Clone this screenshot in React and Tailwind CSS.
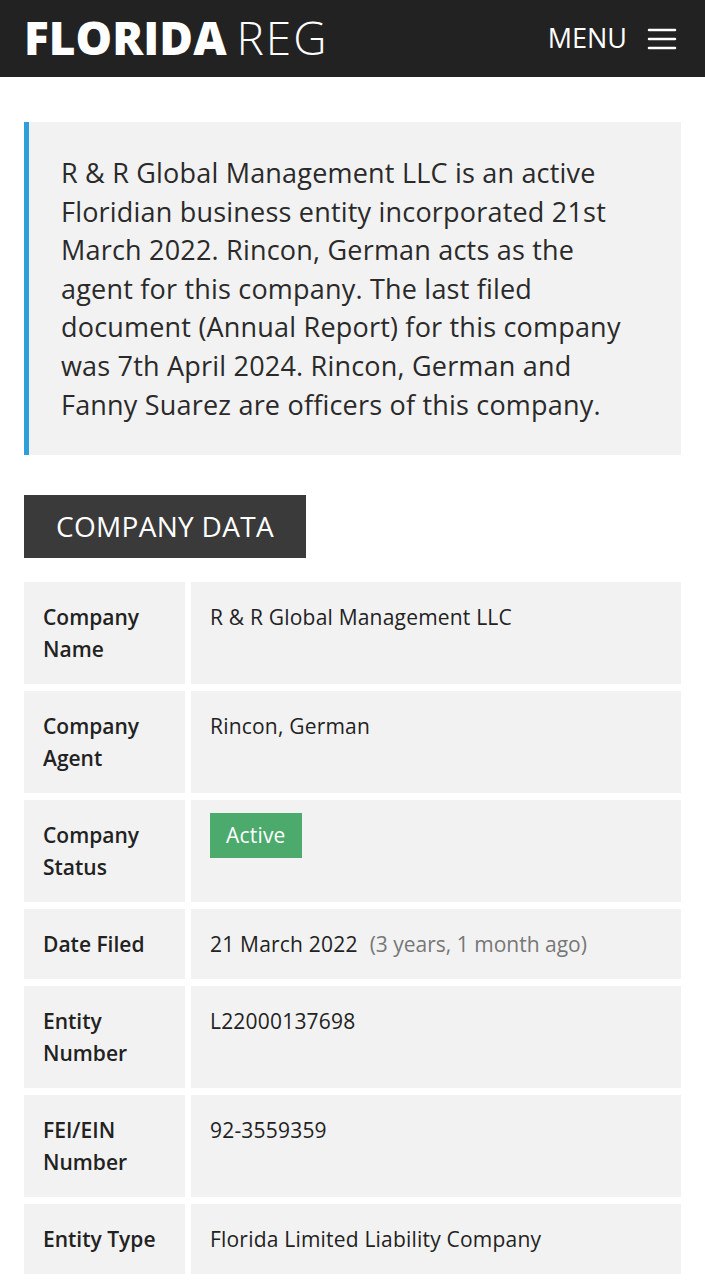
import React from 'react';

const rows = [
  { label: 'Company Name', value: 'R & R Global Management LLC', tall: true },
  { label: 'Company Agent', value: 'Rincon, German', tall: true },
  { label: 'Company Status', badge: 'Active', tall: true },
  { label: 'Date Filed', value: '21 March 2022', note: '(3 years, 1 month ago)' },
  { label: 'Entity Number', value: 'L22000137698', tall: true },
  { label: 'FEI/EIN Number', value: '92-3559359', tall: true },
  { label: 'Entity Type', value: 'Florida Limited Liability Company' },
];

const App = () => {
  return (
    <div className="min-h-screen bg-white font-['Open_Sans',sans-serif] text-[#222]">
      <header className="h-[77px] bg-[#222222] flex items-center justify-between pl-6 pr-7">
        <div className="text-white text-[46px] leading-none font-['Open_Sans',sans-serif] -mt-[3px]">
          <span className="font-extrabold tracking-[0px]">FLORIDA</span>
          <span className="font-light ml-2.5 tracking-[2px]">REG</span>
        </div>
        <button className="flex items-center gap-5 text-white text-[27px] font-normal">
          <span>MENU</span>
          <svg width="30" height="22" viewBox="0 0 30 22" fill="none" stroke="white" strokeWidth="2.5" strokeLinecap="round">
            <line x1="2" y1="2" x2="28" y2="2" />
            <line x1="2" y1="11" x2="28" y2="11" />
            <line x1="2" y1="20" x2="28" y2="20" />
          </svg>
        </button>
      </header>

      <main className="px-6 pt-[45px]">
        {/* summary */}
        <div className="bg-[#f2f2f2] border-l-[5px] border-[#2e9fd8] pl-8 pr-[45px] pt-[32px] pb-[31px]">
          <p className="text-[27px] leading-[38.6px] tracking-[0.2px] text-[#2a2a2a]">
            R &amp; R Global Management LLC is an active Floridian business entity incorporated 21st March 2022. Rincon, German acts as the agent for this company. The last filed document (Annual Report) for this company was 7th April 2024. Rincon, German and Fanny Suarez are officers of this company.
          </p>
        </div>

        <h2 className="mt-10 inline-block bg-[#3a3a3a] text-white text-[28px] tracking-[0.3px] h-[63px] leading-[63px] px-8">
          COMPANY DATA
        </h2>

        <div className="mt-6 grid grid-cols-[161px_1fr] gap-x-[6px] gap-y-[7px]">
          {rows.map((row) => (
            <React.Fragment key={row.label}>
              <div className={`bg-[#f2f2f2] px-[19px] ${row.tall ? 'pt-[19px] pb-[19px] min-h-[102px]' : 'py-[19px]'} text-[21px] leading-[32px] font-semibold text-[#222]`}>
                {row.label}
              </div>
              <div className="bg-[#f2f2f2] px-[19px] py-[19px] text-[21px] leading-[32px] tracking-[0.2px] text-[#222]">
                {row.badge ? (
                  <span className="inline-block bg-[#4caa6c] text-white px-4 h-[45px] leading-[45px] -mt-[6px]">{row.badge}</span>
                ) : (
                  <>
                    {row.value}
                    {row.note && <span className="ml-3 text-[#777] tracking-[0px]">{row.note}</span>}
                  </>
                )}
              </div>
            </React.Fragment>
          ))}
        </div>
      </main>
    </div>
  );
};

export default App;
